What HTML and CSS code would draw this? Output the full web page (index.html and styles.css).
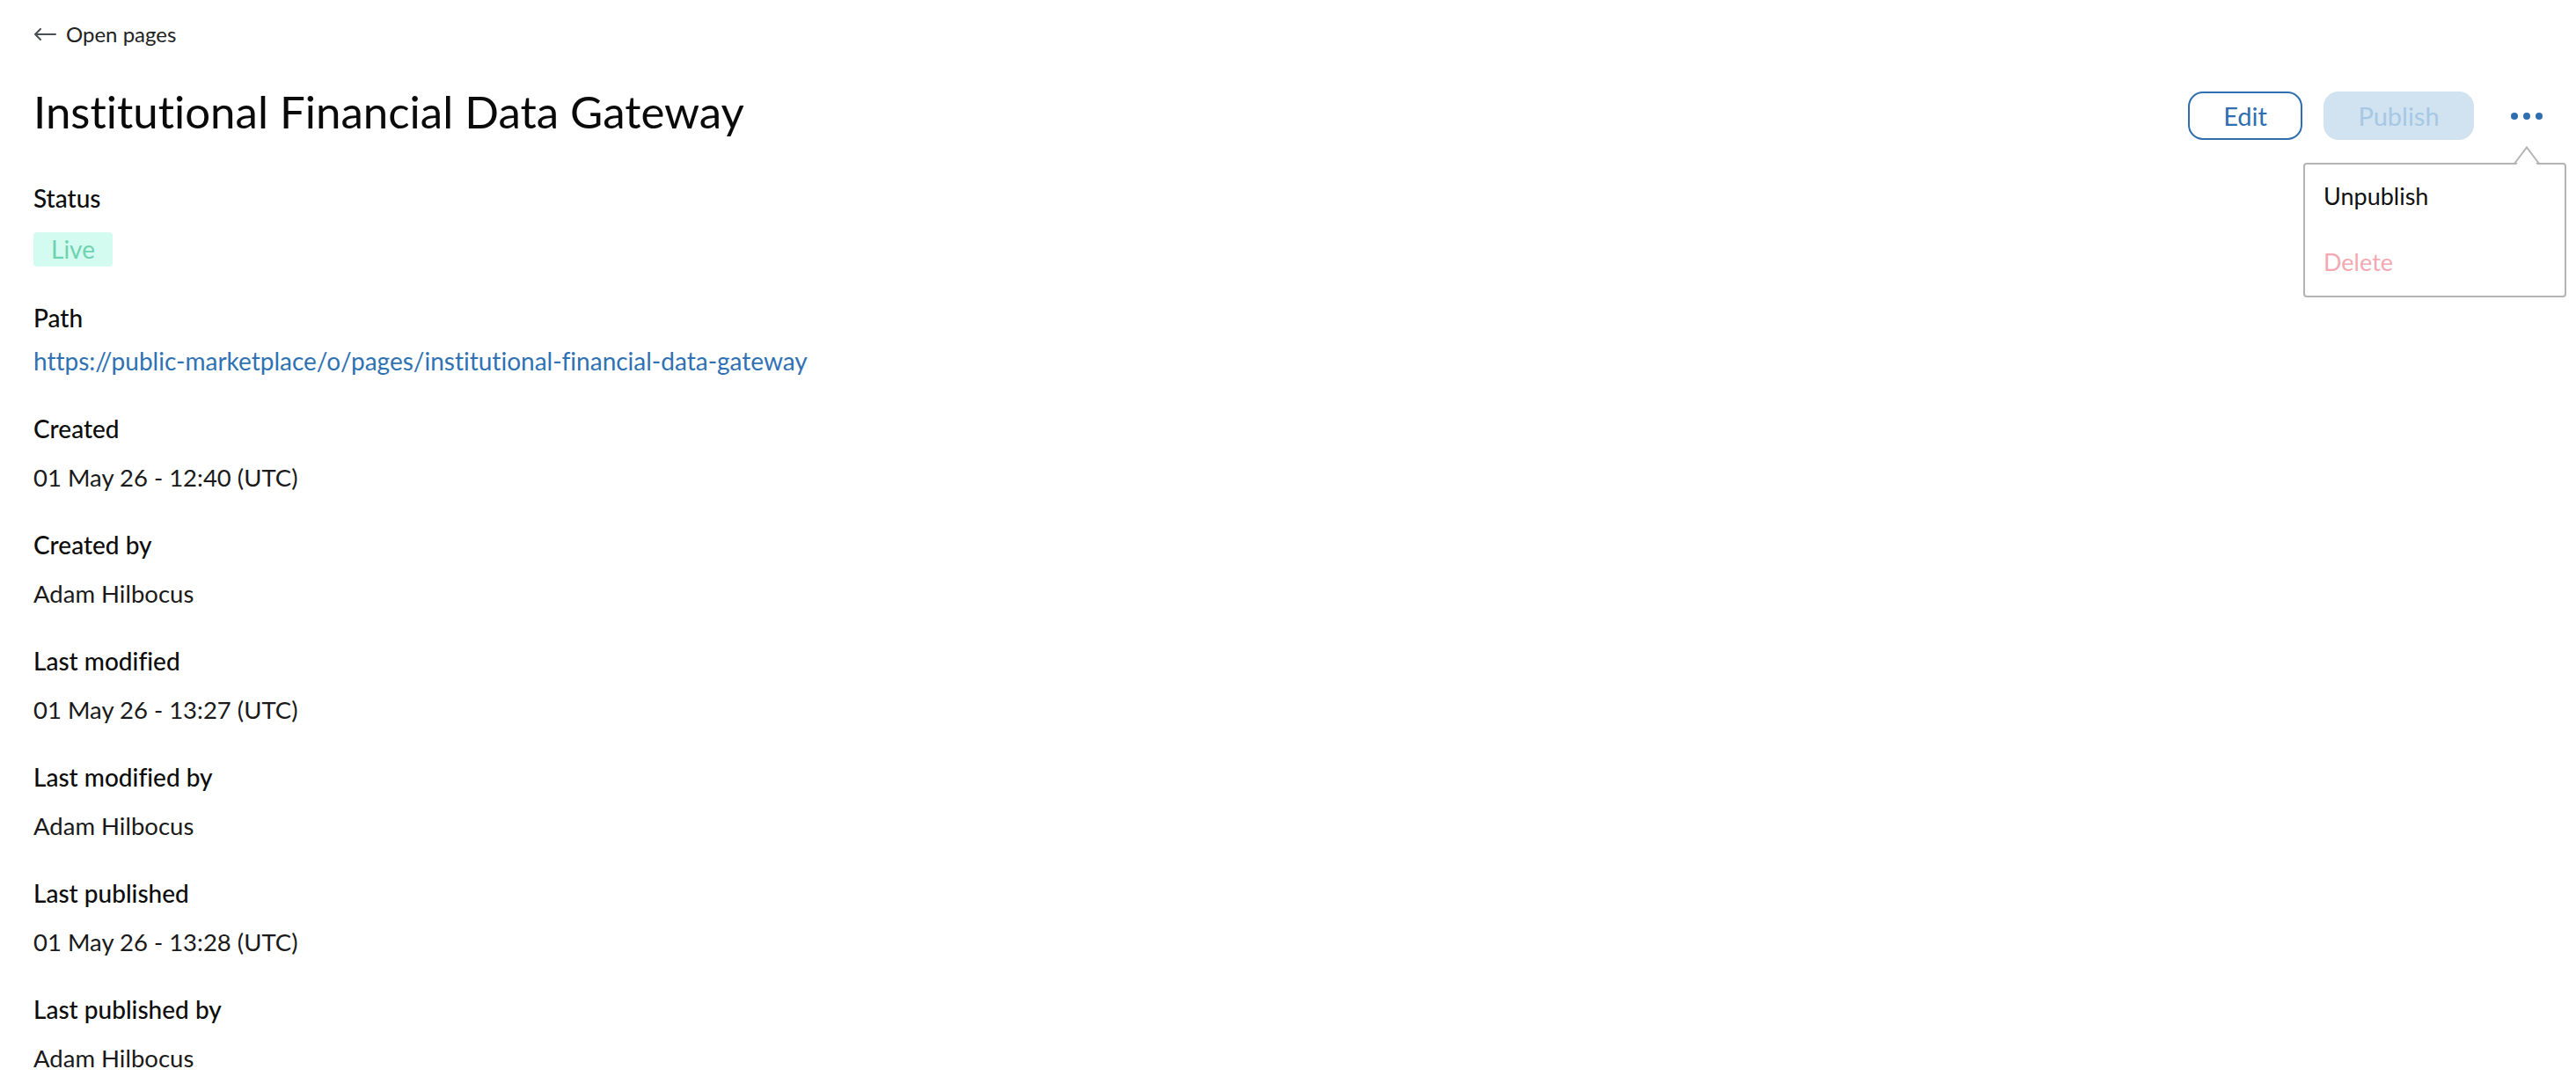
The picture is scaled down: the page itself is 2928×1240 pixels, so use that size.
FILE: index.html
```html
<!DOCTYPE html>
<html lang="en">
<head>
<meta charset="utf-8">
<title>Institutional Financial Data Gateway</title>
<link rel="stylesheet" href="styles.css">
</head>
<body>
<div class="page">
  <a class="back" href="#">
    <svg class="back-icon" width="26" height="14" viewBox="0 0 26 14" fill="none" stroke="#4a4f55" stroke-width="2" stroke-linecap="round" stroke-linejoin="round"><path d="M25 7H2M8 1L2 7l6 6"/></svg>
    <span>Open pages</span>
  </a>
  <div class="header">
    <h1 class="title">Institutional Financial Data Gateway</h1>
    <div class="actions">
      <button class="btn btn-edit">Edit</button>
      <button class="btn btn-publish">Publish</button>
      <button class="more" aria-label="More actions"><span></span><span></span><span></span></button>
      <div class="menu">
        <svg class="menu-caret" width="30" height="24" viewBox="0 0 30 24"><path d="M2 23L15 3.5 28 23Z" fill="#fff"/><path d="M1 20L15 1.5 29 20" fill="none" stroke="#b4b4b4" stroke-width="2"/></svg>
        <div class="menu-item">Unpublish</div>
        <div class="menu-item menu-danger">Delete</div>
      </div>
    </div>
  </div>
  <dl class="fields">
    <div class="field field-status">
      <dt>Status</dt>
      <dd class="badge-row"><span class="badge">Live</span></dd>
    </div>
    <div class="field field-path">
      <dt>Path</dt>
      <dd><a class="link" href="#">https://public-marketplace/o/pages/institutional-financial-data-gateway</a></dd>
    </div>
    <div class="field">
      <dt>Created</dt>
      <dd>01 May 26 - 12:40 (UTC)</dd>
    </div>
    <div class="field">
      <dt>Created by</dt>
      <dd>Adam Hilbocus</dd>
    </div>
    <div class="field">
      <dt>Last modified</dt>
      <dd>01 May 26 - 13:27 (UTC)</dd>
    </div>
    <div class="field">
      <dt>Last modified by</dt>
      <dd>Adam Hilbocus</dd>
    </div>
    <div class="field">
      <dt>Last published</dt>
      <dd>01 May 26 - 13:28 (UTC)</dd>
    </div>
    <div class="field">
      <dt>Last published by</dt>
      <dd>Adam Hilbocus</dd>
    </div>
  </dl>
</div>
</body>
</html>
```
FILE: styles.css
```css
* { box-sizing: border-box; }
html, body { margin: 0; padding: 0; background: #fff; }
body {
  font-family: Lato, "Noto Sans", sans-serif;
  color: #111;
  overflow: hidden;
  font-variant-ligatures: no-common-ligatures;
}
.page {
  padding: 24px 38px 0 38px;
}
.back {
  display: inline-flex;
  align-items: center;
  gap: 11px;
  color: #222;
  text-decoration: none;
  font-size: 24px;
  line-height: 30px;
}
.back-icon { display: block; }
.header {
  display: flex;
  justify-content: space-between;
  align-items: flex-start;
  margin-top: 43px;
}
.title {
  margin: 0;
  font-size: 51px;
  font-weight: 400;
  line-height: 60px;
  color: #0a0a0a;
}
.actions {
  position: relative;
  display: flex;
  align-items: center;
  gap: 24px;
  margin-top: 7px;
}
.btn {
  height: 55px;
  border-radius: 17px;
  font-family: inherit;
  font-size: 29px;
  padding: 0;
  cursor: pointer;
}
.btn-edit {
  width: 130px;
  background: #fff;
  border: 2px solid #2f6faf;
  color: #2f6faf;
}
.btn-publish {
  width: 171px;
  background: #d1e3f0;
  border: none;
  color: #a6c8e4;
}
.more {
  display: flex;
  gap: 6px;
  align-items: center;
  background: none;
  border: none;
  padding: 0 0 0 18px;
  height: 40px;
}
.more span {
  width: 8px;
  height: 8px;
  border-radius: 50%;
  background: #2f6faf;
}
.menu {
  position: absolute;
  top: 81px;
  right: -27px;
  width: 299px;
  height: 153px;
  background: #fff;
  border: 2px solid #b4b4b4;
  border-radius: 4px;
  padding: 17px 21px 0 21px;
}
.menu-caret {
  position: absolute;
  top: -21px;
  right: 28px;
  display: block;
}
.menu-item {
  font-size: 27px;
  line-height: 38px;
  color: #111;
  margin-bottom: 37px;
}
.menu-danger { color: #f3a8b2; margin-bottom: 0; }
.fields {
  margin: 50px 0 0 0;
  display: flex;
  flex-direction: column;
  gap: 44px;
}
.field { display: flex; flex-direction: column; gap: 24px; }
.field dt {
  font-size: 28px;
  line-height: 32px;
  font-weight: 500;
  color: #0d0d0d;
}
.field dd {
  margin: 0;
  font-size: 27.5px;
  line-height: 32px;
  font-weight: 400;
  color: #1a1a1a;
}
.field-status { gap: 23px; margin-bottom: -2px; }
.field-path { gap: 17px; }
.badge-row { display: flex; }
.badge {
  display: block;
  background: #d3fbf0;
  color: #6fd2b0;
  border-radius: 4px;
  padding: 0 20px;
  height: 39px;
  line-height: 39px;
  font-size: 28px;
}
.link {
  color: #2f72b3;
  text-decoration: none;
  font-size: 28px;
}
```
